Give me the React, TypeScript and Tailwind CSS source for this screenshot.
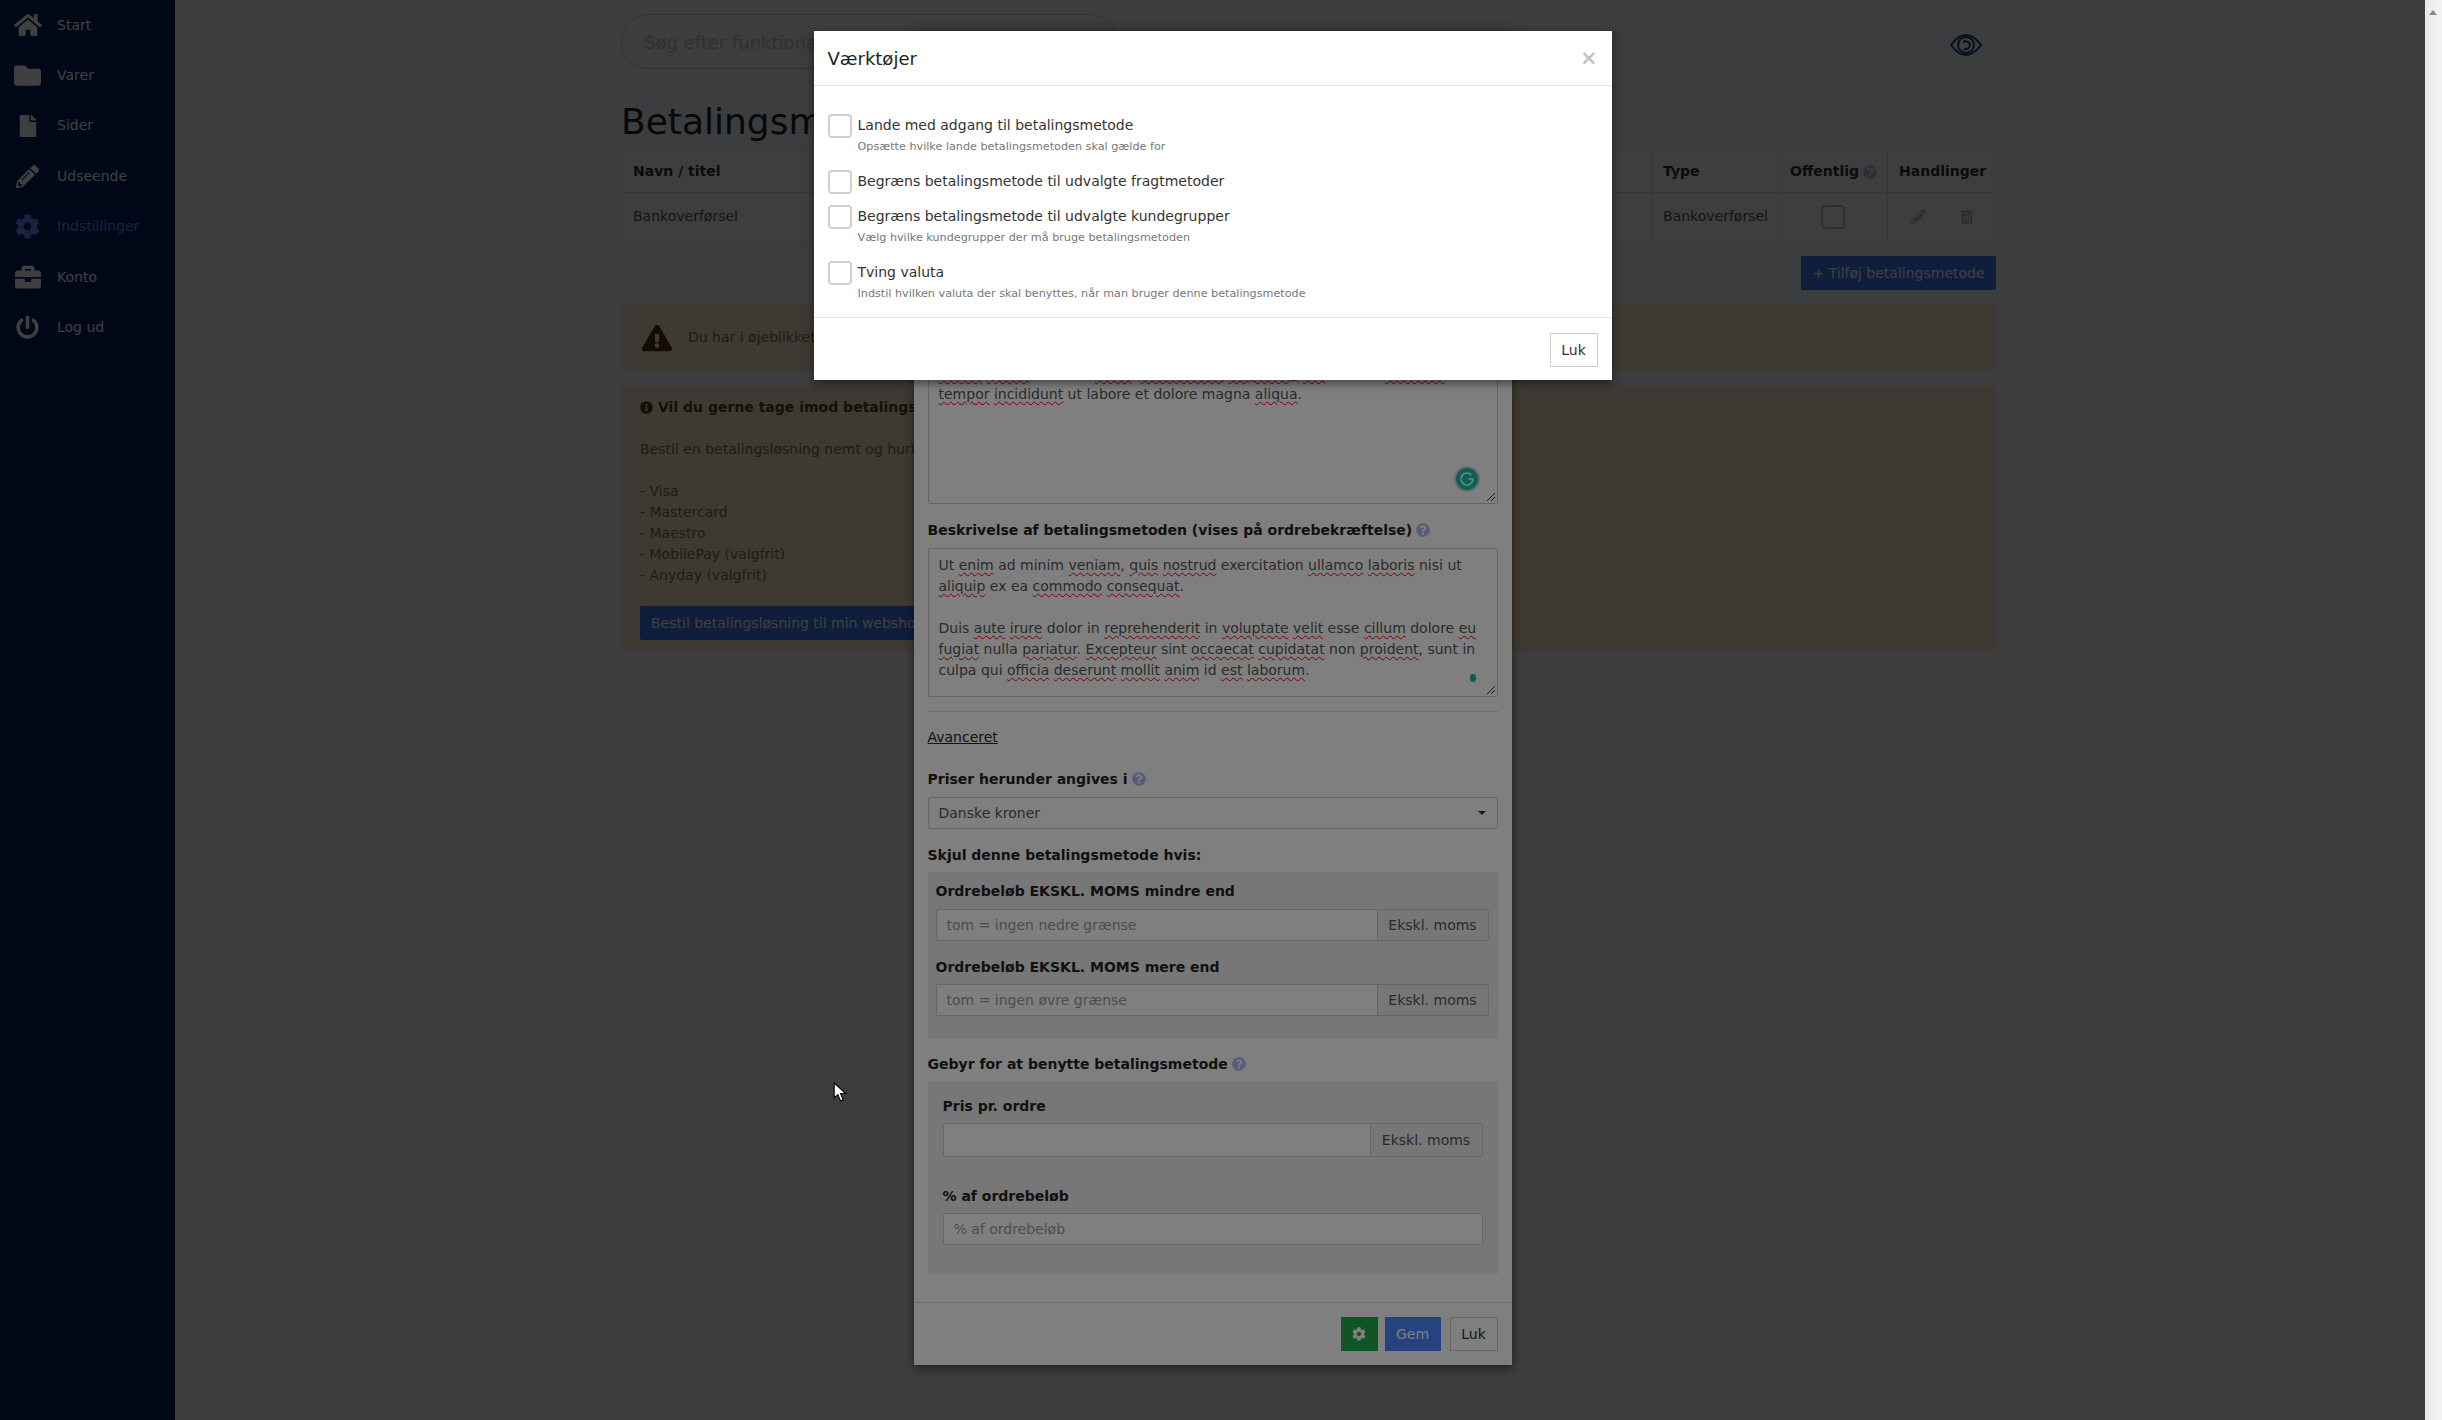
import type { ReactNode } from 'react';
import {
  FaBriefcase,
  FaCog,
  FaExclamationTriangle,
  FaFile,
  FaFolder,
  FaHome,
  FaInfoCircle,
  FaPencilAlt,
  FaPowerOff,
  FaQuestionCircle,
  FaTrashAlt,
} from 'react-icons/fa';

const navItems = [
  { label: 'Start', icon: <FaHome size={28} /> },
  { label: 'Varer', icon: <FaFolder size={27} /> },
  { label: 'Sider', icon: <FaFile size={22} /> },
  { label: 'Udseende', icon: <FaPencilAlt size={23} /> },
  { label: 'Indstillinger', icon: <FaCog size={25} />, active: true },
  { label: 'Konto', icon: <FaBriefcase size={26} /> },
  { label: 'Log ud', icon: <FaPowerOff size={23} /> },
];

const tools = [
  { label: 'Lande med adgang til betalingsmetode', hint: 'Opsætte hvilke lande betalingsmetoden skal gælde for' },
  { label: 'Begræns betalingsmetode til udvalgte fragtmetoder' },
  { label: 'Begræns betalingsmetode til udvalgte kundegrupper', hint: 'Vælg hvilke kundegrupper der må bruge betalingsmetoden' },
  { label: 'Tving valuta', hint: 'Indstil hvilken valuta der skal benyttes, når man bruger denne betalingsmetode' },
];

// Spell check squiggle under a word
function W({ children }: { children: ReactNode }) {
  return <span className="underline decoration-wavy decoration-[#f00000] decoration-1 underline-offset-2">{children}</span>;
}

function Help() {
  return <FaQuestionCircle size={14} className="inline-block ml-[4px] align-[-2px] text-[#a9bdf0]" />;
}

function ResizeGrip() {
  return (
    <svg width="10" height="10" viewBox="0 0 10 10" className="absolute right-[1px] bottom-[1px] text-[#333]">
      <path d="M1 9 L9 1 M5 9 L9 5" stroke="currentColor" strokeWidth="1" />
    </svg>
  );
}

function Addon({ placeholder, inputHeight, width }: { placeholder?: string; inputHeight: string; width: string }) {
  return (
    <div className={`flex border border-[#ccc] rounded-[2px] bg-white ${inputHeight}`}>
      <div className="flex-1 flex items-center pl-[10px] text-[#999]">{placeholder}</div>
      <div className={`flex items-center justify-center bg-[#eee] border-l border-[#ccc] text-[#555] ${width}`}>Ekskl. moms</div>
    </div>
  );
}

export default function App() {
  return (
    <div className="flex h-screen w-full overflow-hidden font-['DejaVu_Sans','Liberation_Sans',sans-serif] text-[14px] leading-[21px] text-[#333]">
      <div className="relative flex flex-1 min-w-0 bg-[#f1f4fa]">
        <aside className="w-[175px] shrink-0 bg-[#001c5c] text-white">
          {navItems.map((item) => (
            <div key={item.label} className={`flex h-[50.4px] items-center ${item.active ? 'text-[#5f8fff]' : ''}`}>
              <span className="flex w-[57px] justify-center pr-[2px]">{item.icon}</span>
              <span>{item.label}</span>
            </div>
          ))}
        </aside>

        <main className="ml-[446px] w-[1375px]">
          <div className="flex items-center justify-between pt-[14px]">
            <div className="flex h-[55px] w-[497px] items-center rounded-full border border-[#ccc] pl-[22px] pt-[1px] text-[18px] text-[#c4c4c4]">
              Søg efter funktionalitet
            </div>
            <svg width="32" height="32" viewBox="0 0 32 32" fill="none" stroke="#233a80" strokeWidth="2" className="mr-[14px] mt-[6px]">
              <path d="M1 16 C7 8 11 6 16 6 C21 6 25 8 31 16 C25 24 21 26 16 26 C11 26 7 24 1 16 Z" />
              <circle cx="16" cy="16" r="8" />
              <path d="M13 13 C16 11 20 13 20 16 C20 19 17 21 14 20" />
            </svg>
          </div>
          <h1 className="h-[81px] pt-[28px] text-[36px] leading-[50px] text-[#222]">Betalingsmetoder</h1>

          <div className="rounded-[3px] border border-[#e6e6e6] bg-[#fafafa]">
            <div className="grid h-[42px] grid-cols-[1029px_127px_109px_108px] items-center border-b border-[#ddd] font-bold">
              <div className="pl-[11px]">Navn / titel</div>
              <div className="flex h-full items-center border-l border-[#ddd] pl-[11px]">Type</div>
              <div className="flex h-full items-center whitespace-nowrap border-l border-[#ddd] pl-[11px]">
                Offentlig
                <Help />
              </div>
              <div className="flex h-full items-center whitespace-nowrap border-l border-[#ddd] pl-[11px]">Handlinger</div>
            </div>
            <div className="grid h-[47px] grid-cols-[1029px_127px_109px_108px] items-center text-[#555]">
              <div className="pl-[11px]">Bankoverførsel</div>
              <div className="flex h-full items-center border-l border-[#ddd] pl-[11px]">Bankoverførsel</div>
              <div className="flex h-full items-center justify-center border-l border-[#ddd]">
                <span className="h-[24px] w-[24px] rounded-[4px] border-2 border-[#bbb] bg-white" />
              </div>
              <div className="flex h-full items-center gap-[34px] border-l border-[#ddd] pl-[23px] text-[#bbb]">
                <FaPencilAlt size={15} />
                <FaTrashAlt size={14} />
              </div>
            </div>
          </div>

          <div className="mt-[15px] flex justify-end">
            <div className="flex h-[34px] w-[195px] items-center justify-center rounded-[2px] bg-[#3f78f0] text-white">
              + Tilføj betalingsmetode
            </div>
          </div>

          <div className="mt-[14px] flex h-[67px] items-center bg-[#faebcc] pl-[21px] text-[#8a6d3b]">
            <FaExclamationTriangle size={30} className="mr-[16px] text-[#4a3500]" />
            Du har i øjeblikket ikke nogen betalingsløsning tilknyttet
          </div>

          <div className="mt-[15px] h-[265px] bg-[#faebcc] px-[19px] pt-[11px] text-[#8a6d3b]">
            <div className="flex items-center font-bold text-[#5a4000]">
              <FaInfoCircle size={13} className="mr-[5px]" />
              Vil du gerne tage imod betalingskort på din webshop?
            </div>
            <div className="mt-[21px]">Bestil en betalingsløsning nemt og hurtigt direkte herfra</div>
            <div className="mt-[21px]">- Visa</div>
            <div>- Mastercard</div>
            <div>- Maestro</div>
            <div>- MobilePay (valgfrit)</div>
            <div>- Anyday (valgfrit)</div>
            <div className="mt-[20px] flex h-[34px] w-[320px] items-center rounded-[2px] bg-[#3f78f0] pl-[11px] text-white">
              Bestil betalingsløsning til min webshop
            </div>
          </div>
        </main>

        {/* first dialog with its backdrop */}
        <div className="absolute inset-0 bg-black/50">
          <div className="mx-auto mt-[31px] h-[1334px] w-[598px] bg-white px-[14px] shadow-[0_3px_9px_rgba(0,0,0,0.5)]">
            <div className="h-[321px]" />
            <div className="relative h-[152px] rounded-[2px] border border-[#ccc] px-[10px] pt-[10px] text-[#555]">
              <div className="whitespace-nowrap">
                <W>Lorem</W> <W>ipsum</W> dolor sit <W>amet</W>, <W>consectetur</W> <W>adipiscing</W> <W>elit</W>, sed do <W>eiusmod</W>
              </div>
              <div className="whitespace-nowrap">
                <W>tempor</W> <W>incididunt</W> ut labore et dolore magna <W>aliqua</W>.
              </div>
              <div className="absolute right-[17px] bottom-[11px] flex h-[26px] w-[26px] items-center justify-center rounded-full bg-[#d8d8d8]">
                <svg width="22" height="22" viewBox="0 0 22 22" fill="none">
                  <circle cx="11" cy="11" r="11" fill="#11c2a8" />
                  <path d="M15.5 7 A6 6 0 1 0 17 11 L12.5 11" stroke="#fff" strokeWidth="1.6" />
                </svg>
              </div>
              <ResizeGrip />
            </div>

            <div className="mt-[16px] whitespace-nowrap font-bold text-[#222]">
              Beskrivelse af betalingsmetoden (vises på ordrebekræftelse)
              <Help />
            </div>
            <div className="relative mt-[7px] h-[149px] rounded-[2px] border border-[#ccc] px-[10px] pt-[6px] text-[#555]">
              <div className="whitespace-nowrap">
                Ut <W>enim</W> ad minim <W>veniam</W>, <W>quis</W> <W>nostrud</W> exercitation <W>ullamco</W> <W>laboris</W> nisi ut
              </div>
              <div className="whitespace-nowrap">
                <W>aliquip</W> ex ea <W>commodo</W> <W>consequat</W>.
              </div>
              <div className="mt-[21px] whitespace-nowrap">
                Duis <W>aute</W> <W>irure</W> dolor in <W>reprehenderit</W> in <W>voluptate</W> <W>velit</W> esse <W>cillum</W> dolore <W>eu</W>
              </div>
              <div className="whitespace-nowrap">
                <W>fugiat</W> nulla <W>pariatur</W>. <W>Excepteur</W> sint <W>occaecat</W> <W>cupidatat</W> non <W>proident</W>, sunt in
              </div>
              <div className="whitespace-nowrap">
                culpa qui <W>officia</W> <W>deserunt</W> <W>mollit</W> <W>anim</W> id <W>est</W> <W>laborum</W>.
              </div>
              <span className="absolute right-[21px] bottom-[14px] h-[8px] w-[6px] rounded-full bg-[#11c2a8]" />
              <ResizeGrip />
            </div>

            <div className="mt-[14px] border-t border-[#ddd]" />
            <div className="mt-[15px] text-[#222] underline">Avanceret</div>

            <div className="mt-[21px] font-bold text-[#222]">
              Priser herunder angives i
              <Help />
            </div>
            <div className="relative mt-[7px] flex h-[32px] items-center rounded-[2px] border border-[#ccc] pl-[10px] text-[#555]">
              Danske kroner
              <span className="absolute right-[11px] top-[13px] border-x-[4px] border-t-[4px] border-x-transparent border-t-[#333]" />
            </div>

            <div className="mt-[16px] font-bold text-[#222]">Skjul denne betalingsmetode hvis:</div>
            <div className="mt-[6px] h-[167px] bg-[#eee] pl-[8px] pr-[9px] pt-[9px]">
              <div className="font-bold text-[#222]">Ordrebeløb EKSKL. MOMS mindre end</div>
              <div className="mt-[7px]">
                <Addon placeholder="tom = ingen nedre grænse" inputHeight="h-[32px]" width="w-[111px]" />
              </div>
              <div className="mt-[16px] font-bold text-[#222]">Ordrebeløb EKSKL. MOMS mere end</div>
              <div className="mt-[6px]">
                <Addon placeholder="tom = ingen øvre grænse" inputHeight="h-[32px]" width="w-[111px]" />
              </div>
            </div>

            <div className="mt-[15px] font-bold text-[#222]">
              Gebyr for at benytte betalingsmetode
              <Help />
            </div>
            <div className="mt-[6px] h-[193px] bg-[#eee] px-[15px] pt-[15px]">
              <div className="font-bold text-[#222]">Pris pr. ordre</div>
              <div className="mt-[6px]">
                <Addon inputHeight="h-[34px]" width="w-[112px]" />
              </div>
              <div className="mt-[29px] font-bold text-[#222]">% af ordrebeløb</div>
              <div className="mt-[6px] flex h-[32px] items-center rounded-[2px] border border-[#ccc] bg-white pl-[10px] text-[#999]">
                % af ordrebeløb
              </div>
            </div>

            <div className="-mx-[14px] mt-[28px] flex justify-end gap-[7px] border-t border-[#ddd] px-[14px] pt-[14px]">
              <div className="flex h-[34px] w-[37px] items-center justify-center bg-[#22a84a] text-white">
                <FaCog size={14} />
              </div>
              <div className="flex h-[34px] w-[56px] items-center justify-center bg-[#4f86ff] text-white">Gem</div>
              <div className="ml-[2px] flex h-[34px] w-[48px] items-center justify-center border border-[#ccc] bg-white">Luk</div>
            </div>
          </div>
        </div>

        {/* tools dialog on top */}
        <div className="absolute inset-0 bg-black/50">
          <div className="mx-auto mt-[31px] h-[349px] w-[798px] bg-white shadow-[0_3px_9px_rgba(0,0,0,0.5)]">
            <div className="flex h-[55px] items-center justify-between border-b border-[#e5e5e5] pl-[14px] pr-[14px]">
              <div className="text-[18px] text-[#222]">Værktøjer</div>
              <div className="text-[21px] font-bold text-[#c4c4c4]">×</div>
            </div>
            <div className="h-[231px] pl-[14px] pt-[28px]">
              {tools.map((tool) => (
                <div key={tool.label} className={`flex gap-[6px] ${tool.hint ? 'mb-[16px]' : 'mb-[11px]'}`}>
                  <span className="h-[24px] w-[24px] shrink-0 rounded-[4px] border-2 border-[#d0d0d0]" />
                  <div className="pt-[1px]">
                    <div className="text-[#333]">{tool.label}</div>
                    {tool.hint && <div className="mt-[4px] text-[11.2px] leading-[14px] text-[#777]">{tool.hint}</div>}
                  </div>
                </div>
              ))}
            </div>
            <div className="flex justify-end border-t border-[#e5e5e5] pr-[14px] pt-[15px]">
              <div className="flex h-[34px] w-[48px] items-center justify-center border border-[#ccc] text-[#333]">Luk</div>
            </div>
          </div>
        </div>

        {/* mouse pointer */}
        <svg width="15" height="21" viewBox="0 0 14 20" className="absolute left-[833px] top-[1082px]">
          <path d="M1 1 L1 15 L4.5 12 L7 18 L9.5 17 L7 11 L12 11 Z" fill="#fff" stroke="#000" strokeWidth="1" />
        </svg>
      </div>

      {/* browser scrollbar */}
      <div className="relative w-[17px] shrink-0 bg-gradient-to-r from-[#e8e8e8] to-[#f4f4f4]">
        <span className="absolute left-[4px] top-[10px] border-x-[4px] border-b-[5px] border-x-transparent border-b-[#888]" />
      </div>
    </div>
  );
}
